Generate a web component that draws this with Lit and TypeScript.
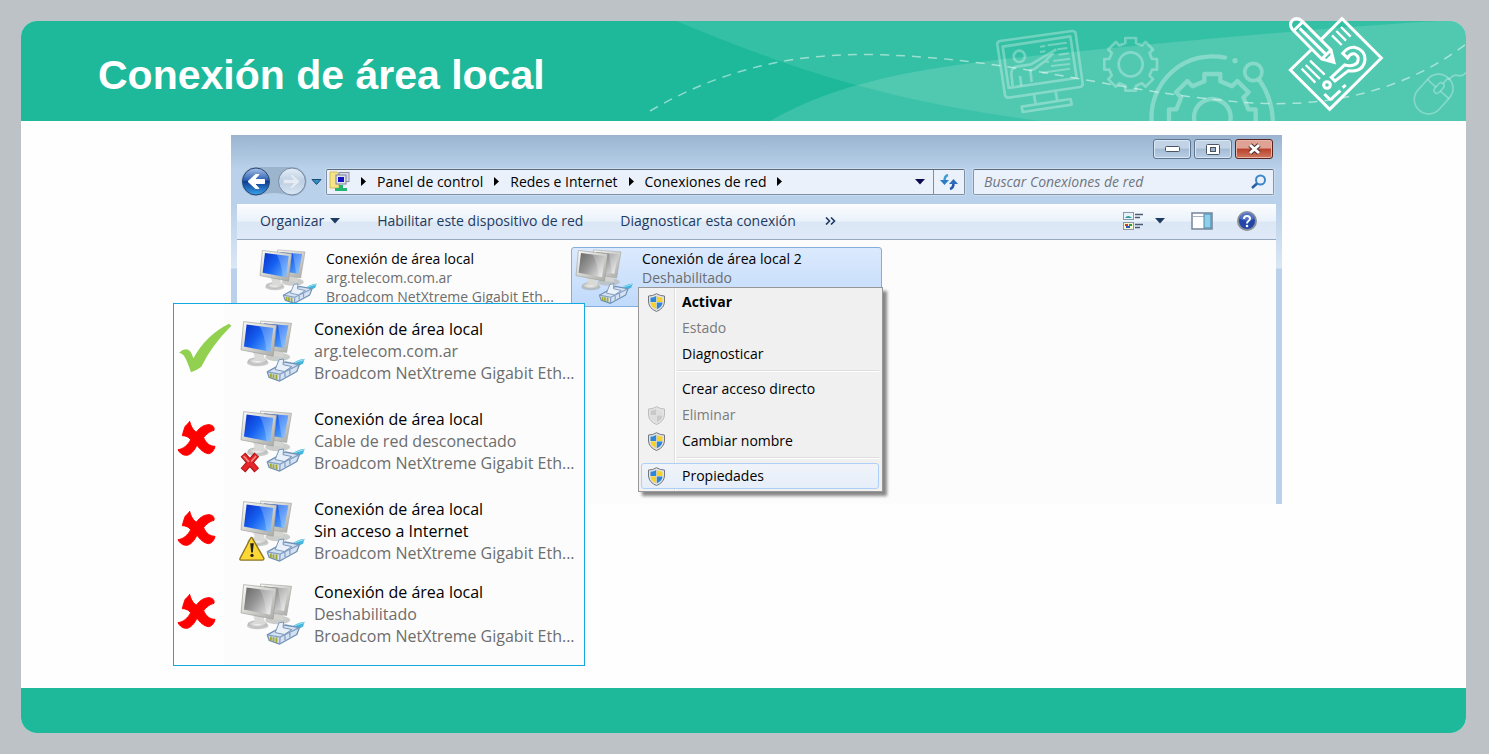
import { LitElement, html, svg, css, nothing } from "lit";
import { customElement, property } from "lit/decorators.js";

/** Outline of a toothed wheel centred on (cx, cy). */
function gearPath(cx: number, cy: number, outer: number, base: number, half: number): string {
  const points: string[] = [];
  for (let k = 0; k < 8; k++) {
    const a = (k * Math.PI) / 4;
    const corners = [[-half, -base], [-half, -outer], [half, -outer], [half, -base]];
    for (const [x, y] of corners) {
      const px = cx + x * Math.cos(a) - y * Math.sin(a);
      const py = cy + x * Math.sin(a) + y * Math.cos(a);
      points.push(`${px.toFixed(1)} ${py.toFixed(1)}`);
    }
  }
  return `M${points.join("L")}Z`;
}

@customElement("connection-icon")
export class ConnectionIcon extends LitElement {
  @property({ type: Boolean }) disabled = false;
  @property() badge = "";

  static styles = css`
    :host { display: block; }
    svg { display: block; width: 100%; height: auto; overflow: visible; }
  `;

  private renderBadge() {
    if (this.badge === "error") {
      return svg`
        <g transform="translate(-2 128)" stroke-linecap="butt">
          <path d="M8 8L50 56M50 8L8 56" stroke="#a80f0f" stroke-width="19"/>
          <path d="M9 10L49 54M49 10L9 54" stroke="#e3262a" stroke-width="14"/>
          <path d="M10 12L26 30M48 12L33 29" stroke="#f58a86" stroke-width="5"/>
        </g>`;
    }
    if (this.badge === "warning") {
      return svg`
        <path d="M33 114L70 178Q70 183 65 183L0 183Q-5 183 -3 178L30 115Z" fill="#fdd835" stroke="#8a7420" stroke-width="4" stroke-linejoin="round"/>
        <path d="M28 132H39L36 160H31Z" fill="#222"/>
        <circle cx="33.500" cy="169" r="5" fill="#222"/>`;
    }
    return nothing;
  }

  render() {
    const dim = this.disabled;
    return html`
      <svg viewBox="0 0 195 190" fill="none" aria-hidden="true">
        <defs>
          <linearGradient id="screen" x1="0" y1="0" x2="1" y2=".7">
            <stop offset="0" stop-color=${dim ? "#666" : "#0a2fc4"}/>
            <stop offset=".5" stop-color=${dim ? "#979797" : "#1560f0"}/>
            <stop offset="1" stop-color=${dim ? "#dedede" : "#5aa6ff"}/>
          </linearGradient>
          <linearGradient id="frame" x1="0" y1="0" x2="1" y2="1">
            <stop offset="0" stop-color="#fbfbf8"/>
            <stop offset="1" stop-color="#a9aaa6"/>
          </linearGradient>
          <radialGradient id="foot">
            <stop offset="0" stop-color="#fff"/>
            <stop offset="1" stop-color="#b4b6b4"/>
          </radialGradient>
        </defs>
        <ellipse cx="112" cy="113" rx="38" ry="13" fill="#b7b9b6" opacity=".7"/>
        <path d="M96 90L128 96L130 112L96 110Z" fill="#d3d4d0"/>
        <path d="M60 3L154 10L139 99L52 84Z" fill="url(#frame)" stroke="#a5a6a3" stroke-width="2"/>
        <path d="M70 11L144 17L131 85L62 74Z" fill="url(#screen)"/>
        <path d="M112 14L144 17L131 85L124 83Z" fill="#fff" opacity=".25"/>
        <ellipse cx="51" cy="130" rx="33" ry="11" fill="#999b99" opacity=".5"/>
        <ellipse cx="50" cy="125" rx="30" ry="11" fill="url(#foot)"/>
        <path d="M36 96L70 102Q70 122 78 125L40 126Q44 112 36 96Z" fill="#d9dad7"/>
        <path d="M8 5L108 16L98 110L0 91Z" fill="url(#frame)" stroke="#9b9c99" stroke-width="2"/>
        <path d="M17 14L98 24L89 97L9 81Z" fill="url(#screen)"/>
        <path d="M57 19L98 24L89 97L77 94Q74 50 57 19Z" fill="#fff" opacity=".22"/>
        <path d="M146 141Q168 120 194 118L189 133Q172 139 160 150Z" fill="#45b7dc"/>
        <path d="M154 137Q172 124 192 121" stroke="#a5e4f5" stroke-width="3"/>
        <path d="M80 158L134 128L178 136L170 157L118 186L86 175Z" fill="#d5e2f4" stroke="#6f8fb4" stroke-width="4" stroke-linejoin="round"/>
        <path d="M80 158L119 165L176 137M119 165L118 185M134 160V174M149 152V166" stroke="#829fc2" stroke-width="4"/>
        <path d="M104 151L116 121L130 119L128 136L155 142L132 157Z" fill="#eaf1fa" stroke="#7795b8" stroke-width="3"/>
        <path d="M91 163V175M99 165V178M108 166V181" stroke="#a3a832" stroke-width="6"/>
        ${this.renderBadge()}
      </svg>`;
  }
}

@customElement("slide-artwork")
export class SlideArtwork extends LitElement {
  static styles = css`
    :host { position: absolute; inset: 0; pointer-events: none; }
    .clip { position: absolute; inset: 0; overflow: hidden; border-radius: 0 16px 0 0; }
    .scene { position: absolute; top: 0; right: 0; width: 820px; height: 100px; }
    .badge { position: absolute; top: -5px; right: 81px; width: 98px; height: 97px; overflow: visible; }
  `;

  render() {
    return html`
      <div class="clip">
        <svg class="scene" viewBox="646 21 820 100" fill="none" aria-hidden="true">
          <path d="M676 21C790 68 880 100 1040 121H1466V21Z" fill="#fff" fill-opacity=".1"/>
          <path d="M770 121C850 75 950 64 1073 52Q1300 29 1440 21H1466V121Z" fill="#fff" fill-opacity=".14"/>
          <g transform="translate(980 0) scale(.33333)" stroke="#fff" stroke-opacity=".3" stroke-width="8" stroke-linejoin="round">
            <path d="M60 123L276 93Q285 92 287 101L308 250Q309 259 300 261L86 293Q77 294 75 285L52 134Q51 125 60 123Z"/>
            <path d="M68 140L271 109L290 234L86 264Z"/>
            <path d="M162 286L167 312M227 276L232 302M125 320L272 297L275 314L128 336Z"/>
            <circle cx="118" cy="169" r="17"/>
            <path d="M98 258L94 222Q93 204 110 200L153 193L188 172L229 148M120 228L124 258M155 246L151 210L162 208L194 184L220 160"/>
            <path d="M203 136L260 128M180 140L196 138M180 156L196 154M232 148L262 144M236 164L266 160M220 183L270 176M198 186L207 185M213 198L270 192M186 218L270 206" stroke-width="6"/>
            <path d=${gearPath(452, 193, 79, 64, 16)}/>
            <circle cx="452" cy="193" r="36"/>
            <g stroke-width="13">
              <path d=${gearPath(697, 352, 130, 108, 24)}/>
              <circle cx="697" cy="352" r="55"/>
              <path d="M515 366A183 183 0 0 1 735 173" stroke-linecap="round"/>
              <circle cx="820" cy="216" r="26" stroke-width="11"/>
              <path d="M838 240Q876 292 879 366"/>
            </g>
            <circle cx="765" cy="182" r="8" fill="#fff" fill-opacity=".3" stroke="none"/>
            <g stroke-width="5">
              <g transform="rotate(42 1361 282)">
                <rect x="1318" y="217" width="86" height="130" rx="42"/>
                <rect x="1352" y="240" width="18" height="36" rx="9"/>
                <path d="M1361 217V240M1318 262H1352M1370 262H1404"/>
              </g>
              <path d="M1405 240Q1422 220 1436 227Q1448 230 1460 216"/>
            </g>
          </g>
          <path d="M650 111C720 70 790 54 866 54.500C1000 56 1110 90 1220 100C1300 110 1390 102 1466 44" stroke="#fff" stroke-opacity=".5" stroke-width="1.500" stroke-dasharray="9 7"/>
        </svg>
      </div>
      <svg class="badge" viewBox="921 48 294 291" fill="none" stroke="#fff" stroke-width="9" aria-hidden="true">
        <path d="M1023 119L1086 56L1204 174L1049 328L931 210L993 150"/>
        <path d="M937 88Q926 72 937 61Q950 50 965 62L1053 150L1062 187L1025 177Z"/>
        <path d="M940 93L969 65M959 85L1038 163M1025 177L1053 150"/>
        <path d="M1042 176L1054 164L1062 187Z" fill="#fff" stroke-width="3"/>
        <path d="M1056 106L1085 135M1069 93L1098 122M1083 81L1112 110M965 206L1006 248M977 195L1020 237M990 182L1034 224" stroke-width="7"/>
        <path d="M1088 160Q1104 140 1124 142Q1156 150 1155 180Q1150 212 1118 213L1105 212L1065 243L1054 232L1094 195Q1120 201 1132 188Q1140 170 1125 162Q1112 158 1103 174Z"/>
        <circle cx="1041" cy="255" r="10"/>
        <path d="M1033 282L1047 296Q1052 300 1057 294L1081 272M1088 263L1097 255"/>
      </svg>`;
  }
}

interface MenuEntry {
  label: string;
  shield?: "color" | "gray";
  bold?: boolean;
  disabled?: boolean;
  hover?: boolean;
  separated?: boolean;
}

const MENU: MenuEntry[] = [
  { label: "Activar", shield: "color", bold: true },
  { label: "Estado", disabled: true },
  { label: "Diagnosticar" },
  { label: "Crear acceso directo", separated: true },
  { label: "Eliminar", shield: "gray", disabled: true },
  { label: "Cambiar nombre", shield: "color" },
  { label: "Propiedades", shield: "color", hover: true, separated: true },
];

const ADAPTER = "Broadcom NetXtreme Gigabit Eth...";

const STATES = [
  { ok: true, status: "arg.telecom.com.ar", badge: "", off: false, strong: false },
  { ok: false, status: "Cable de red desconectado", badge: "error", off: false, strong: false },
  { ok: false, status: "Sin acceso a Internet", badge: "warning", off: false, strong: true },
  { ok: false, status: "Deshabilitado", badge: "", off: true, strong: false },
];

@customElement("app-root")
export class AppRoot extends LitElement {
  static styles = css`
    :host {
      display: block;
      font-family: "Open Sans", "Noto Sans", sans-serif;
      font-size: 14px;
      color: #000;
    }
    * { box-sizing: border-box; }
    button, input { font: inherit; color: inherit; margin: 0; padding: 0; border: 0; background: none; }
    a { color: inherit; text-decoration: none; }
    svg { display: block; flex: none; }
    ul { list-style: none; margin: 0; padding: 0; }
    p { margin: 0; }

    .stage { min-height: 100vh; display: flex; padding: 21px 23px 21px 21px; background: #bcc2c6; }
    .slide { flex: 1; display: flex; flex-direction: column; min-width: 0; background: #fefefe; border-radius: 16px; }
    .banner { position: relative; height: 100px; display: flex; align-items: center; padding: 8px 77px 0; background: #1db99a; border-radius: 16px 16px 0 0; }
    .title { position: relative; margin: 0; font: bold 41px/48px "Liberation Sans", Arial, sans-serif; color: #fff; white-space: nowrap; }
    .body { position: relative; flex: 1; padding: 14px 184px 23px 210px; }
    .foot { height: 45px; background: #1db99a; border-radius: 0 0 16px 16px; }

    .window { background: linear-gradient(#9ab4d0, #b9d1ea 34px); line-height: 20px; }
    .caption { display: flex; justify-content: flex-end; gap: 3px; padding: 4px 9px 0; }
    .cap { width: 38px; height: 20px; display: grid; place-items: center; border: 1px solid #5f748f; border-radius: 3px; background: linear-gradient(#c2d3e6 45%, #a5bbd4 50%, #b9cfe6); box-shadow: inset 0 0 0 1px #d9e6f3; }
    .close { border-color: #5b2320; background: linear-gradient(#e0a294 45%, #b9412c 50%, #cf7a5f); box-shadow: inset 0 0 0 1px #e9b5a8; }
    .nav { display: flex; align-items: center; gap: 8px; padding: 8px 8px 8px 10px; }
    .travel { display: flex; align-items: center; gap: 4px; margin-right: -4px; }
    .address { flex: 1; min-width: 0; height: 26px; display: flex; align-items: center; border: 1px solid #7f8fa3; border-top-color: #5e6b7b; border-radius: 2px; background: #eaf1fa; box-shadow: 0 0 0 1px #c9dcf0; }
    .crumbs { flex: 1; display: flex; align-items: center; gap: 10px; padding-left: 2px; white-space: nowrap; }
    .tail { width: 26px; height: 24px; display: grid; place-items: center; }
    .refresh { width: 31px; height: 24px; display: grid; place-items: center; border-left: 1px solid #7f8fa3; }
    .search { width: 301px; height: 26px; display: flex; align-items: center; padding: 0 6px 0 10px; border: 1px solid #8896a8; border-top-color: #5e6b7b; border-radius: 2px; background: #eaf1fa; box-shadow: 0 0 0 1px #c9dcf0; }
    .query { flex: 1; min-width: 0; outline: 0; }
    .query::placeholder { color: #6f7680; font-style: italic; opacity: 1; }

    .frame { display: flex; flex-direction: column; padding: 0 6px; background: linear-gradient(#b9d1ea, #dae7f4 64px, #b9d1ea 65px); }
    .toolbar { height: 36px; display: flex; align-items: center; padding: 0 19px 2px 23px; color: #1f3a60; white-space: nowrap; border-bottom: 1px solid #98a8c0; background: linear-gradient(#fcfdff, #eaf2fb 48%, #dce7f5 52%, #dfe9f7); }
    .commands { flex: 1; display: flex; align-items: center; gap: 37px; }
    .drop { display: flex; align-items: center; gap: 6px; }
    .more { margin-left: -8px; }
    .tools { display: flex; align-items: center; gap: 24px; }
    .views { gap: 11px; margin-right: 2px; }
    .files { height: 264px; display: flex; gap: 5px; padding: 7px 18px; background: #fcfcfc; }
    .item { position: relative; width: 311px; height: 60px; display: flex; gap: 9px; padding: 1px 4px 0; border: 1px solid transparent; border-radius: 3px; white-space: nowrap; line-height: 19px; }
    .picked { border-color: #84acdd; background: linear-gradient(#dceafd, #c0dafb); }
    .icon { width: 57px; flex: none; }
    .muted { color: #6d6d6d; }

    .menu { position: absolute; left: 66px; top: 39px; width: 245px; padding: 1px 3px 2px 2px; border: 1px solid #979797; background: linear-gradient(90deg, #f1f1f1 35px, #dedede 35px, #dedede 36px, #fff 36px, #fff 37px, #f0f0f0 37px); box-shadow: 4px 4px 3px #0007; line-height: 20px; }
    .entry { width: 100%; height: 26px; display: flex; align-items: center; gap: 16px; padding: 0 5px; border: 1px solid transparent; border-radius: 3px; text-align: left; }
    .entry:disabled { color: #7b7b7b; }
    .bold { font-weight: 700; }
    .hover { border-color: #aecff7; background: linear-gradient(#f0f4f9, #e6eef9); }
    .slot { width: 19px; flex: none; }
    .rule { height: 2px; margin: 3px 0 4px 36px; border-top: 1px solid #dedede; border-bottom: 1px solid #fff; }

    .panel { position: absolute; left: 152px; top: 182px; width: 412px; padding: 14px 4px 18px 4px; border: 1px solid #12a8e0; background: linear-gradient(90deg, #fefefe 50px, #fcfcfc 50px); }
    .state { display: grid; grid-template-columns: 54px 64px 1fr; gap: 9px; align-items: center; padding-bottom: 24px; font-size: 16px; line-height: 22px; white-space: nowrap; }
    .state:nth-child(3) { padding-bottom: 17px; }
    .state:last-child { padding-bottom: 0; }
    .mark { margin-bottom: 6px; overflow: visible; }
  `;

  private arrow() {
    return html`<svg width="7" height="9" viewBox="0 0 7 9" aria-hidden="true"><path d="M1 0L6 4.500L1 9Z" fill="#000"/></svg>`;
  }

  private caret(fill: string) {
    return html`<svg width="10" height="6" viewBox="0 0 10 6" aria-hidden="true"><path d="M0 0H10L5 5.500Z" fill=${fill}/></svg>`;
  }

  private shield(kind: "color" | "gray") {
    const gray = kind === "gray";
    const a = gray ? "#c9c9c9" : "#2d86d8";
    const b = gray ? "#dedede" : "#f8d22a";
    return html`<svg width="19" height="19" viewBox="0 0 19 19" aria-hidden="true">
      <path d="M9.500 .7Q13 3 17.500 3V9Q17 15.500 9.500 18.500Q2 15.500 1.500 9V3Q6 3 9.500 .7Z" fill=${gray ? "#e4e4e4" : "#e0e2e5"} stroke=${gray ? "#bdbdbd" : "#74787e"}/>
      <path d="M9.200 3Q6.500 4.500 3.500 4.700V9H9.200Z" fill=${a}/>
      <path d="M9.800 3Q12.500 4.500 15.500 4.700V9H9.800Z" fill=${b}/>
      <path d="M3.500 9.500H9.200V16.200Q4 14 3.500 9.500Z" fill=${b}/>
      <path d="M15.500 9.500H9.800V16.200Q15 14 15.500 9.500Z" fill=${a}/>
    </svg>`;
  }

  private mark(ok: boolean) {
    return ok
      ? html`<svg class="mark" width="54" height="50" viewBox="0 0 162 150" role="img" aria-label="Correcto"><path d="M3 89Q18 76 30 80Q40 84 46 106Q84 36 153 2L160 8Q100 68 70 131Q56 142 39 148Q27 112 18 98Q12 90 3 89Z" fill="#92d050"/></svg>`
      : html`<svg class="mark" width="37" height="35" viewBox="0 0 111 105" role="img" aria-label="Incorrecto"><path d="M35 1C38 14 46 30 56 33C66 18 80 11 93 11C104 12 110 18 108 28C96 30 84 40 77 50C84 66 95 76 111 76C108 90 100 98 91 98C78 96 66 86 57 72C50 88 38 102 26 103C12 103 4 94 0 86C16 84 30 72 38 56C32 48 24 44 13 44C15 34 18 24 22 15C26 12 31 8 35 1Z" fill="#f00" stroke="#f00" stroke-width="3" stroke-linejoin="round"/></svg>`;
  }

  private renderMenu() {
    return html`<div class="menu" role="menu">
      ${MENU.map((m) => html`
        ${m.separated ? html`<div class="rule" role="separator"></div>` : nothing}
        <button role="menuitem" class="entry ${m.bold ? "bold" : ""} ${m.hover ? "hover" : ""}" ?disabled=${!!m.disabled}>
          <span class="slot">${m.shield ? this.shield(m.shield) : nothing}</span>${m.label}
        </button>`)}
    </div>`;
  }

  private renderNav() {
    return html`<div class="nav">
      <div class="travel">
        <svg width="66" height="29" viewBox="0 0 66 29" fill="none" aria-hidden="true">
          <defs>
            <linearGradient id="back" x1="0" y1="0" x2="0" y2="1">
              <stop offset="0" stop-color="#a9c3e8"/><stop offset=".45" stop-color="#2c5fb2"/><stop offset=".5" stop-color="#0d3c93"/><stop offset="1" stop-color="#3aa2ea"/>
            </linearGradient>
            <linearGradient id="next" x1="0" y1="0" x2="0" y2="1">
              <stop offset="0" stop-color="#e6eef7"/><stop offset=".5" stop-color="#bccfe3"/><stop offset="1" stop-color="#dbe8f5"/>
            </linearGradient>
          </defs>
          <path d="M15 0H51A14.500 14.500 0 0 1 51 29Q40 26 33 26T15 29A14.500 14.500 0 0 1 15 0Z" fill="#9db4cd"/>
          <circle cx="15" cy="14.500" r="13.500" fill="url(#back)" stroke="#2a4574"/>
          <circle cx="51" cy="14.500" r="13.500" fill="url(#next)" stroke="#7488a0"/>
          <path d="M7 14.500L14.500 7.500H18L13.500 12.500H23.500V16.500H13.500L18 21.500H14.500Z" fill="#fff" stroke="#fff"/>
          <path d="M59 14.500L51.500 7.500H48L52.500 12.500H42.500V16.500H52.500L48 21.500H51.500Z" fill="#e4ebf3" stroke="#cbd7e4"/>
        </svg>
        <svg width="11" height="8" viewBox="0 0 11 8" aria-hidden="true"><path d="M1 1.500H10L5.500 6.500Z" fill="#2f8fc4" stroke="#1e4a76"/></svg>
      </div>
      <div class="address">
        <nav class="crumbs" aria-label="Ruta">
          <svg width="21" height="22" viewBox="0 0 21 22" aria-hidden="true">
            <path d="M1 1H8L10 3V17H1Z" fill="#f6e489" stroke="#d5bd58"/>
            <rect x="10" y="1.500" width="10" height="9" fill="#d8dae4" stroke="#8b90a8"/>
            <rect x="7" y="4" width="10" height="9" fill="#e2e4ec" stroke="#7b809a"/>
            <rect x="9" y="6" width="6" height="5" fill="#1212c8"/>
            <path d="M10 14H14V17H18V20H6V17H10Z" fill="#22b573"/>
          </svg>
          ${this.arrow()}<a href="#">Panel de control</a>
          ${this.arrow()}<a href="#">Redes e Internet</a>
          ${this.arrow()}<a href="#">Conexiones de red</a>
          ${this.arrow()}
        </nav>
        <button class="tail" aria-label="Ubicaciones anteriores">${this.caret("#0c0c50")}</button>
        <button class="refresh" aria-label="Actualizar">
          <svg width="18" height="16" viewBox="0 0 18 16" fill="none" aria-hidden="true">
            <path d="M8 1Q4.500 2 4.500 7" stroke="#3a9bd8" stroke-width="2.500"/><path d="M0 6H9L4.500 11Z" fill="#2a7cc9"/>
            <path d="M10 15Q13.500 14 13.500 9" stroke="#2258a8" stroke-width="2.500"/><path d="M9 10H18L13.500 5Z" fill="#2a6cbd"/>
          </svg>
        </button>
      </div>
      <label class="search">
        <input class="query" type="search" aria-label="Buscar" placeholder="Buscar Conexiones de red">
        <svg width="17" height="16" viewBox="0 0 17 16" fill="none" aria-hidden="true"><circle cx="10.500" cy="6" r="4.500" stroke="#3d86c6" stroke-width="2"/><path d="M7 9.500L2 14" stroke="#2a5fa5" stroke-width="2.500"/></svg>
      </label>
    </div>`;
  }

  private renderToolbar() {
    return html`<div class="toolbar">
      <div class="commands">
        <button class="drop">Organizar ${this.caret("#1f3a60")}</button>
        <button>Habilitar este dispositivo de red</button>
        <button>Diagnosticar esta conexión</button>
        <button class="more" aria-label="Más comandos">
          <svg width="11" height="8" viewBox="0 0 11 8" fill="none" stroke="#1f3a60" stroke-width="1.600" aria-hidden="true"><path d="M1 .5L4.500 4L1 7.500M6 .5L9.500 4L6 7.500"/></svg>
        </button>
      </div>
      <div class="tools">
        <button class="drop views" aria-label="Vistas">
          <svg width="22" height="20" viewBox="0 0 22 20" aria-hidden="true">
            <rect x="1.500" y="1.500" width="10" height="7" fill="#e6f3fb" stroke="#8a97a8"/><path d="M3 7Q6 3 10 7Z" fill="#2f9c9a"/>
            <rect x="1.500" y="11.500" width="10" height="7" fill="#f3f6d0" stroke="#8a97a8"/><path d="M3 13H6V15H3Z" fill="#d33"/><path d="M7 13H10V15H7Z" fill="#2a9a40"/><path d="M4 15H8V17H4Z" fill="#35b"/>
            <path d="M13 3.500H21M13 6.500H18M13 13.500H21M13 16.500H18" stroke="#4c5a70" stroke-width="1.500"/>
          </svg>
          ${this.caret("#1f3a60")}
        </button>
        <button aria-label="Panel de vista previa">
          <svg width="22" height="18" viewBox="0 0 22 18" aria-hidden="true"><rect x="1" y="1" width="20" height="16" fill="#fff" stroke="#75859a" stroke-width="1.500"/><path d="M2 4.500H13" stroke="#a7b3c2"/><rect x="13" y="2" width="7" height="14" fill="#8ed0ea" stroke="#4c87a8"/></svg>
        </button>
        <button aria-label="Ayuda">
          <svg width="20" height="20" viewBox="0 0 20 20" fill="none" aria-hidden="true"><circle cx="10" cy="10" r="9" fill="#2245a8" stroke="#8a8f98" stroke-width="2"/><path d="M3 8A7 7 0 0 1 17 8Q10 11 3 8Z" fill="#6f92dc" opacity=".6"/><path d="M7 8Q7 5 10 5T13 7.500Q13 9 11.500 10T10 12.500" stroke="#fff" stroke-width="2"/><circle cx="10" cy="15" r="1.300" fill="#fff"/></svg>
        </button>
      </div>
    </div>`;
  }

  render() {
    return html`
      <div class="stage">
        <article class="slide">
          <header class="banner">
            <slide-artwork></slide-artwork>
            <h1 class="title">Conexión de área local</h1>
          </header>
          <main class="body">
            <section class="window" aria-label="Conexiones de red">
              <div class="caption">
                <button class="cap" aria-label="Minimizar"><svg width="15" height="6" viewBox="0 0 15 6" aria-hidden="true"><rect x=".5" y=".5" width="14" height="5" rx="1" fill="#fff" stroke="#4a5563"/></svg></button>
                <button class="cap" aria-label="Maximizar"><svg width="14" height="11" viewBox="0 0 14 11" aria-hidden="true"><rect x=".5" y=".5" width="13" height="10" rx="1" fill="#fff" stroke="#4a5563"/><rect x="4.500" y="3.500" width="5" height="4" fill="#9db3cc" stroke="#4a5563"/></svg></button>
                <button class="cap close" aria-label="Cerrar"><svg width="15" height="12" viewBox="0 0 15 12" fill="none" aria-hidden="true"><path d="M3 2L12 10M12 2L3 10" stroke="#4c3030" stroke-width="5"/><path d="M3 2L12 10M12 2L3 10" stroke="#fff" stroke-width="3"/></svg></button>
              </div>
              ${this.renderNav()}
              <div class="frame">
                ${this.renderToolbar()}
                <div class="files">
                  <div class="item">
                    <connection-icon class="icon"></connection-icon>
                    <div><p>Conexión de área local</p><p class="muted">arg.telecom.com.ar</p><p class="muted">${ADAPTER}</p></div>
                  </div>
                  <div class="item picked">
                    <connection-icon class="icon" disabled></connection-icon>
                    <div><p>Conexión de área local 2</p><p class="muted">Deshabilitado</p></div>
                    ${this.renderMenu()}
                  </div>
                </div>
              </div>
            </section>
            <ul class="panel">
              ${STATES.map((s) => html`<li class="state">
                ${this.mark(s.ok)}
                <connection-icon ?disabled=${s.off} badge=${s.badge}></connection-icon>
                <div><p>Conexión de área local</p><p class=${s.strong ? "" : "muted"}>${s.status}</p><p class="muted">${ADAPTER}</p></div>
              </li>`)}
            </ul>
          </main>
          <footer class="foot"></footer>
        </article>
      </div>`;
  }
}
